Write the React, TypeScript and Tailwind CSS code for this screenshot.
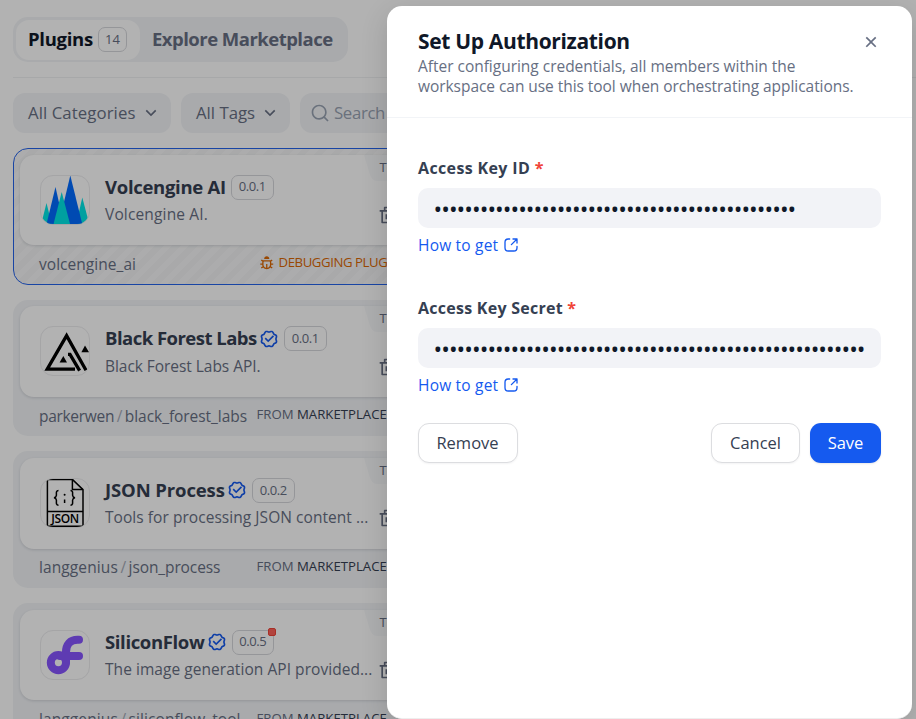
import type { ReactNode } from "react";
import {
  RiArrowDownSLine,
  RiBugLine,
  RiCloseLine,
  RiDeleteBinLine,
  RiSearchLine,
  RiVerifiedBadgeLine,
} from "react-icons/ri";

function VolcengineLogo() {
  return (
    <svg viewBox="0 0 50 50" className="-m-px size-[50px]">
      <polygon points="6.5,28 1,50 12,50" fill="#00e5e5" />
      <polygon points="15.5,12 6.3,50 24,50" fill="#006aff" />
      <polygon points="42.3,22.5 36,50 49.5,50" fill="#00e5e5" />
      <polygon points="30.3,0.5 18.5,50 42.5,50" fill="#006aff" />
      <polygon points="21.7,17 13.3,50 30.3,50" fill="#00e5e5" />
    </svg>
  );
}

function BlackForestLogo() {
  return (
    <svg viewBox="0 0 50 50" className="-m-px size-[50px]">
      <path d="M35 43.2H7.2L26.6 9.6L46 44.3" fill="none" stroke="#000" strokeWidth="3.3" />
      <path d="M28 28.4H30L39.6 44.6" fill="none" stroke="#000" strokeWidth="3.3" />
      <polygon points="23.3,30 19.6,36.5 27,36.5" />
      <polygon points="45,19.4 41.4,26.2 49,26.2" />
    </svg>
  );
}

function JsonLogo() {
  return (
    <svg viewBox="0 0 50 50" className="-m-px size-[50px]" fill="none" stroke="#000" strokeWidth="1.5">
      <path d="M7.4 1.4H32.4L43 11.6V48.2H7.4Z" />
      <path d="M32.4 1.4V11.6H43M7.4 33.4H43" />
      <path d="M18.5 12.4C15.5 12.4 16.6 16 16.4 17.4C16.2 18.9 15.3 19.6 14 19.8C15.3 20 16.2 20.7 16.4 22.2C16.6 23.6 15.5 27.2 18.5 27.2" />
      <path d="M30.5 12.4C33.5 12.4 32.4 16 32.6 17.4C32.8 18.9 33.7 19.6 35 19.8C33.7 20 32.8 20.7 32.6 22.2C32.4 23.6 33.5 27.2 30.5 27.2" />
      <circle cx="24.6" cy="16.8" r="1" fill="#000" stroke="none" />
      <path d="M24.6 21.5V25" />
      <text
        x="25.2"
        y="45.4"
        textAnchor="middle"
        textLength="28"
        fill="#000"
        stroke="none"
        className="font-['Open_Sans',sans-serif] text-[12px] font-semibold"
      >
        JSON
      </text>
    </svg>
  );
}

function SiliconFlowLogo() {
  return (
    <svg viewBox="0 0 50 50" className="-m-px size-[50px]" fill="none" stroke="#8755ff" strokeWidth="8" strokeLinecap="round">
      <circle cx="18.4" cy="32.6" r="7.6" />
      <path d="M39 9.8H37.5C30 9.8 26 14.5 26 22V32" />
      <path d="M20 26H39" />
    </svg>
  );
}

function ExternalLinkIcon() {
  return (
    <svg viewBox="0 0 12 12" className="size-4" fill="none" stroke="currentColor" strokeLinecap="round" strokeLinejoin="round">
      <path d="M10.5 4.5V1.5M10.5 1.5H7.5M10.5 1.5L6.3 5.7M5 1.5H3.9C2.2 1.5 1.5 2.2 1.5 3.9V8.1C1.5 9.8 2.2 10.5 3.9 10.5H8.1C9.8 10.5 10.5 9.8 10.5 8.1V7" />
    </svg>
  );
}

type Plugin = {
  name: string;
  nameClass: string;
  version: string;
  description: string;
  descriptionClass: string;
  org?: string;
  orgClass?: string;
  id: string;
  idClass: string;
  logo: ReactNode;
  debugging?: boolean;
  updatable?: boolean;
};

const plugins: Plugin[] = [
  {
    name: "Volcengine AI",
    nameClass: "w-[126px] tracking-[-0.3px]",
    version: "0.0.1",
    description: "Volcengine AI.",
    descriptionClass: "tracking-[0.15px]",
    id: "volcengine_ai",
    idClass: "tracking-[0.04px]",
    logo: <VolcengineLogo />,
    debugging: true,
  },
  {
    name: "Black Forest Labs",
    nameClass: "w-[152px] tracking-[-0.52px]",
    version: "0.0.1",
    description: "Black Forest Labs API.",
    descriptionClass: "tracking-[-0.05px]",
    org: "parkerwen",
    orgClass: "tracking-[-0.3px]",
    id: "black_forest_labs",
    idClass: "tracking-[-0.05px]",
    logo: <BlackForestLogo />,
  },
  {
    name: "JSON Process",
    nameClass: "w-[120px] tracking-[-0.12px]",
    version: "0.0.2",
    description: "Tools for processing JSON content ...",
    descriptionClass: "tracking-[0.05px]",
    org: "langgenius",
    orgClass: "tracking-[0.1px]",
    id: "json_process",
    idClass: "tracking-[-0.1px]",
    logo: <JsonLogo />,
  },
  {
    name: "SiliconFlow",
    nameClass: "w-[99.5px] tracking-[-0.36px]",
    version: "0.0.5",
    description: "The image generation API provided...",
    descriptionClass: "tracking-[0.05px]",
    org: "langgenius",
    orgClass: "tracking-[0.1px]",
    id: "siliconflow_tool",
    idClass: "tracking-[0.08px]",
    logo: <SiliconFlowLogo />,
    updatable: true,
  },
];

function PluginCard({ plugin }: { plugin: Plugin }) {
  const frame = plugin.debugging
    ? "border border-[#2563eb] bg-[repeating-linear-gradient(135deg,#f2f3f4_0px,#f2f3f4_6px,#f7f7f8_6px,#f7f7f8_12px)] p-[5.5px]"
    : "bg-[#f2f4f7] p-[6.5px]";
  return (
    <div className={`h-[136.7px] w-[430px] shrink-0 rounded-[15px] ${frame}`}>
      <div className="relative flex h-[90.7px] overflow-hidden rounded-[14px] bg-white px-[20px] pt-[20px] shadow-[0_1px_3px_rgba(16,24,40,0.14)]">
        <div className="size-[50px] shrink-0 overflow-hidden rounded-[13px] border border-[#ececee]">{plugin.logo}</div>
        <div className="ml-[15.5px]">
          <div className="flex h-[25px] items-center text-[#354052]">
            <span className={`whitespace-nowrap pb-[0.5px] text-[18.5px] font-bold leading-[24px] ${plugin.nameClass}`}>{plugin.name}</span>
            {!plugin.debugging && <RiVerifiedBadgeLine className="ml-[2px] mr-[5px] size-[20px] text-[#155aef]" />}
            <span className="relative flex h-[25px] w-[42.5px] items-center justify-center rounded-[7px] border border-[#d6d7db] text-[13px] tracking-[-0.4px] text-[#676f83]">
              {plugin.version}
              {plugin.updatable && (
                <i className="absolute -right-[3px] -top-[3px] size-[8px] rounded-[2px] border border-[#f04438] bg-[#ff6259]" />
              )}
            </span>
          </div>
          <p className={`mt-[4.5px] whitespace-nowrap text-[15.5px] leading-[20px] text-[#676f83] ${plugin.descriptionClass}`}>
            {plugin.description}
          </p>
        </div>
        <div className="absolute right-0 top-0 flex h-[26px]">
          <svg viewBox="0 0 14 26" className="h-[26px] w-[14px]">
            <path d="M0 0H14V26C9 26 7 23 5.5 18Z" fill="#f8f9fb" />
          </svg>
          <span className="w-[59px] bg-[#f8f9fb] pl-[2px] text-[13px] leading-[25px] text-[#676f83]">Tool</span>
        </div>
        <RiDeleteBinLine className="absolute left-[358.5px] top-[50.5px] size-[20px] text-[#676f83]" />
      </div>
      <div className="flex h-[38px] items-center pl-[19.5px] text-[15.5px] text-[#676f83]">
        <div className="flex w-[217.5px] shrink-0 items-center whitespace-nowrap pt-px">
          {plugin.org && (
            <>
              <span className={plugin.orgClass}>{plugin.org}</span>
              <span className="mx-[2.5px] text-[#a6abb8]">/</span>
            </>
          )}
          <span className={plugin.idClass}>{plugin.id}</span>
        </div>
        {plugin.debugging ? (
          <div className="flex items-center gap-[4.5px] whitespace-nowrap pb-[2px] pl-[2px] text-[13.2px] tracking-[-0.43px] text-[#dc6803]">
            <RiBugLine className="size-[15.5px]" />
            DEBUGGING PLUGIN
          </div>
        ) : (
          <div className="whitespace-nowrap pb-px text-[13.2px]">
            FROM <span className="text-[#354052]">MARKETPLACE</span>
          </div>
        )}
      </div>
    </div>
  );
}

function PluginsPage() {
  return (
    <div className="flex h-full flex-col pl-[13px]">
      <div className="mt-[17px] flex h-[45px] w-[335px] shrink-0 items-center rounded-[15px] bg-[#f2f4f7] px-[2.5px] text-[18.5px] font-bold">
        <div className="flex h-[40px] w-[124px] items-center rounded-[13px] bg-white pl-[12.5px] text-[#101828]">
          <span className="w-[65px] pb-[1.5px] tracking-[-0.3px]">Plugins</span>
          <span className="ml-[5px] flex h-[25px] w-[29px] items-center justify-center rounded-[7px] border border-[#d6d7db] text-[13px] font-normal text-[#676f83]">
            14
          </span>
        </div>
        <span className="ml-[12.5px] whitespace-nowrap pb-[1.5px] tracking-[-0.52px] text-[#676f83]">Explore Marketplace</span>
      </div>
      <div className="mt-[15px] h-px shrink-0 bg-[#f0f1f3]" />
      <div className="mt-[15px] flex h-[40px] shrink-0 gap-[10px] text-[16.8px] text-[#676f83]">
        <div className="flex w-[158px] items-center rounded-[12px] bg-[#f2f4f7] pl-[15px]">
          <span className="whitespace-nowrap tracking-[0.07px]">All Categories</span>
          <RiArrowDownSLine className="ml-[5.5px] size-[20px]" />
        </div>
        <div className="flex w-[109px] items-center rounded-[12px] bg-[#f2f4f7] pl-[15px]">
          <span className="whitespace-nowrap">All Tags</span>
          <RiArrowDownSLine className="ml-[5px] size-[20px]" />
        </div>
        <div className="flex w-[250px] items-center rounded-[12px] bg-[#f2f4f7] pl-[10px] text-[#98a2b2]">
          <RiSearchLine className="size-[20px]" />
          <span className="ml-[4px] tracking-[-0.35px]">Search</span>
        </div>
      </div>
      <div className="mt-[15px] flex flex-col gap-[15px]">
        {plugins.map((plugin) => (
          <PluginCard key={plugin.name} plugin={plugin} />
        ))}
      </div>
    </div>
  );
}

function SecretField({ label, labelClass, length }: { label: string; labelClass: string; length: number }) {
  return (
    <div>
      <div className={`text-[16px] font-bold leading-[40px] text-[#354052] ${labelClass}`}>
        {label} <span className="text-[#f04438]">*</span>
      </div>
      <div className="flex h-[40px] items-center overflow-hidden rounded-[10px] bg-[#f2f3f7] pl-[15.5px] pt-[2px] text-[23px] leading-[40px] tracking-[-0.95px] text-[#101828]">
        {"•".repeat(length)}
      </div>
      <a className="mt-[7.5px] flex h-[19.5px] items-center text-[15.5px] tracking-[0.2px] text-[#155aef]">
        How to get
        <span className="ml-[5px]">
          <ExternalLinkIcon />
        </span>
      </a>
    </div>
  );
}

function AuthorizationDrawer() {
  return (
    <div className="absolute left-[387px] top-[6px] flex h-[713px] w-[525px] flex-col rounded-[15px] border-b border-[#eeeeee] bg-white shadow-[0_8px_28px_rgba(9,9,11,0.14)]">
      <div className="flex h-[112px] shrink-0 justify-between border-b border-[#f2f4f7] pl-[31px] pr-[31px] pt-[20px]">
        <div>
          <h1 className="text-[21px] font-bold leading-[30px] tracking-[-0.34px] text-[#101828]">Set Up Authorization</h1>
          <p className="w-[440px] text-[15.5px] leading-[20px] tracking-[-0.05px] text-[#676f83]">
            <span className="tracking-[-0.02px]">After configuring credentials, all members within the</span>
            <br />
            workspace can use this tool when orchestrating applications.
          </p>
        </div>
        <RiCloseLine className="mt-[6px] size-[20px] text-[#676f83]" />
      </div>
      <div className="flex flex-col gap-[33px] px-[31px] pt-[30px]">
        <SecretField label="Access Key ID" labelClass="tracking-[0.36px]" length={47} />
        <SecretField label="Access Key Secret" labelClass="tracking-[0.26px]" length={56} />
      </div>
      <div className="mt-[28px] flex h-[40px] px-[31px] text-[16.5px] font-medium text-[#354052]">
        <button className="w-[100px] rounded-[11px] border border-[#dcdde0] bg-white pr-px shadow-[0_1px_2px_rgba(16,24,40,0.05)]">Remove</button>
        <button className="ml-auto w-[89px] rounded-[11px] border border-[#dcdde0] bg-white shadow-[0_1px_2px_rgba(16,24,40,0.05)]">Cancel</button>
        <button className="ml-[10px] w-[71px] rounded-[11px] bg-[#155aef] text-white shadow-[0_1px_2px_rgba(16,24,40,0.1)]">Save</button>
      </div>
    </div>
  );
}

export default function App() {
  return (
    <div className="relative h-[719px] w-[916px] overflow-hidden bg-white font-['Open_Sans','Noto_Sans',sans-serif]">
      <PluginsPage />
      <div className="absolute inset-0 bg-black/30" />
      <AuthorizationDrawer />
    </div>
  );
}
